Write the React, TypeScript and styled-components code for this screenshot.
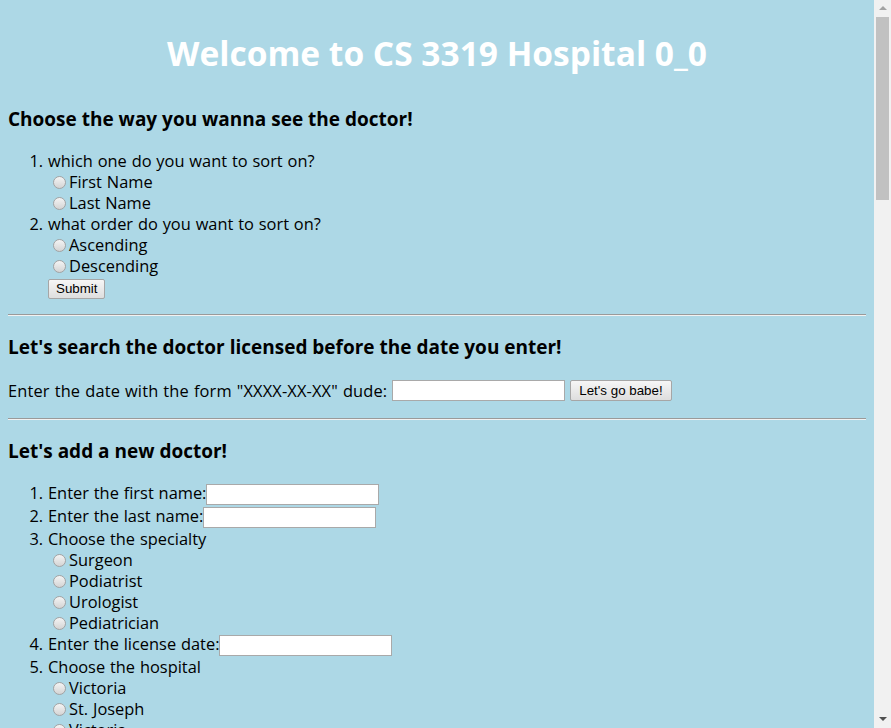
import React from "react";
import styled, { createGlobalStyle } from "styled-components";

const GlobalStyle = createGlobalStyle`
  html, body {
    margin: 0;
    height: 100%;
    background: #add8e6;
  }
  body {
    font-family: "Open Sans", "Noto Sans", sans-serif;
    font-size: 16.4px;
    word-spacing: 0.6px;
    color: #000;
  }
  #root {
    height: 100%;
  }
`;

const Frame = styled.div`
  display: flex;
  height: 100%;
`;

const Main = styled.div`
  flex: 1;
  min-width: 0;
  overflow: hidden;
`;

const ScrollBar = styled.div`
  display: flex;
  flex-direction: column;
  width: 17px;
  background: #f1f1f1;
`;

const ArrowButton = styled.div<{ $down?: boolean }>`
  display: flex;
  align-items: center;
  justify-content: center;
  height: 17px;
  flex: none;

  &::after {
    content: "";
    width: 0;
    height: 0;
    border-left: 4px solid transparent;
    border-right: 4px solid transparent;
    ${(p) =>
      p.$down
        ? "border-top: 4px solid #505050; margin-top: -2px;"
        : "border-bottom: 4px solid #a3a3a3; margin-top: -1px;"}
  }
`;

const Thumb = styled.div`
  height: 183px;
  margin: 0 2px;
  background: #c1c1c1;
  flex: none;
`;

const Track = styled.div`
  flex: 1;
`;

const Page = styled.div`
  box-sizing: border-box;
  padding: 8px;
`;

const Title = styled.h1`
  margin: 22px 0 30px;
  text-align: center;
  color: #fff;
  font-size: 33.5px;
  line-height: 46px;
  font-weight: 700;
  word-spacing: 0;
`;

const Heading = styled.h3<{ $tight?: boolean }>`
  margin: 0 0 ${(p) => (p.$tight ? 0 : 18)}px;
  font-size: 19px;
  line-height: 26px;
  font-weight: 700;
  word-spacing: 0;
`;

const Rule = styled.hr`
  margin: 17px 0 18px;
  border: 0;
  border-top: 1px solid #9a9a9a;
  border-bottom: 1px solid #f2f2f2;
`;

const List = styled.ol`
  margin: 0;
  padding-left: 40px;
  line-height: 21px;
`;

const Item = styled.li<{ $tall?: boolean }>`
  line-height: ${(p) => (p.$tall ? 22 : 21)}px;
`;

const Option = styled.label`
  display: block;
  height: 21px;
`;

const Radio = styled.input.attrs({ type: "radio" })`
  appearance: none;
  box-sizing: border-box;
  width: 13px;
  height: 13px;
  margin: 3px 3px 0 5px;
  vertical-align: -1px;
  border: 1px solid #a3a3a3;
  border-radius: 50%;
  background: linear-gradient(#f4f4f4, #d4d4d4);
`;

const Field = styled.input.attrs({ type: "text" })`
  box-sizing: border-box;
  width: 173px;
  height: 21px;
  margin: 0;
  padding: 1px 2px;
  border: 1px solid #a9a9a9;
  background: #fff;
  vertical-align: middle;
  font: 13.33px Arial, "Liberation Sans", sans-serif;
`;

const Button = styled.button<{ $wide?: boolean }>`
  box-sizing: border-box;
  height: ${(p) => (p.$wide ? 21 : 20)}px;
  margin: 0 0 0 ${(p) => (p.$wide ? 5 : 0)}px;
  padding: 0 ${(p) => (p.$wide ? 8 : 7)}px;
  border: 1px solid #a6a6a6;
  border-radius: 2px;
  background: linear-gradient(#f6f6f6, #dedede);
  font: 13.33px Arial, "Liberation Sans", sans-serif;
  word-spacing: 0;
  color: #000;
  vertical-align: middle;
`;

const Actions = styled.div`
  margin-top: 1px;
  height: 20px;
  line-height: 20px;
`;

const SearchRow = styled.div`
  display: flex;
  align-items: center;
  height: 21px;
  margin-top: 20px;
  letter-spacing: 0.15px;
`;

const RadioGroup = ({ name, options }: { name: string; options: string[] }) => (
  <>
    {options.map((o, i) => (
      <Option key={o + i}>
        <Radio name={name} value={o} />
        {o}
      </Option>
    ))}
  </>
);

export default function App() {
  return (
    <Frame>
      <GlobalStyle />
      <Main>
        <Page>
          <Title>Welcome to CS 3319 Hospital 0_0</Title>

          <Heading>Choose the way you wanna see the doctor!</Heading>
          <form>
            <List>
              <Item>
                which one do you want to sort on?
                <RadioGroup name="sortOn" options={["First Name", "Last Name"]} />
              </Item>
              <Item>
                what order do you want to sort on?
                <RadioGroup name="order" options={["Ascending", "Descending"]} />
                <Actions>
                  <Button type="submit">Submit</Button>
                </Actions>
              </Item>
            </List>
          </form>
          <Rule />

          <Heading $tight>Let's search the doctor licensed before the date you enter!</Heading>
          <SearchRow>
            Enter the date with the form "XXXX-XX-XX" dude:&nbsp;
            <Field />
            <Button $wide type="submit">Let's go babe!</Button>
          </SearchRow>
          <Rule />

          <Heading>Let's add a new doctor!</Heading>
          <form>
            <List>
              <Item $tall>
                Enter the first name:
                <Field />
              </Item>
              <Item $tall>
                Enter the last name:
                <Field />
              </Item>
              <Item>
                Choose the specialty
                <RadioGroup
                  name="specialty"
                  options={["Surgeon", "Podiatrist", "Urologist", "Pediatrician"]}
                />
              </Item>
              <Item $tall>
                Enter the license date:
                <Field />
              </Item>
              <Item>
                Choose the hospital
                <RadioGroup name="hospital" options={["Victoria", "St. Joseph", "Victoria"]} />
                <Actions>
                  <Button type="submit">Submit</Button>
                </Actions>
              </Item>
            </List>
          </form>
          <Rule />
        </Page>
      </Main>
      <ScrollBar>
        <ArrowButton />
        <Thumb />
        <Track />
        <ArrowButton $down />
      </ScrollBar>
    </Frame>
  );
}
